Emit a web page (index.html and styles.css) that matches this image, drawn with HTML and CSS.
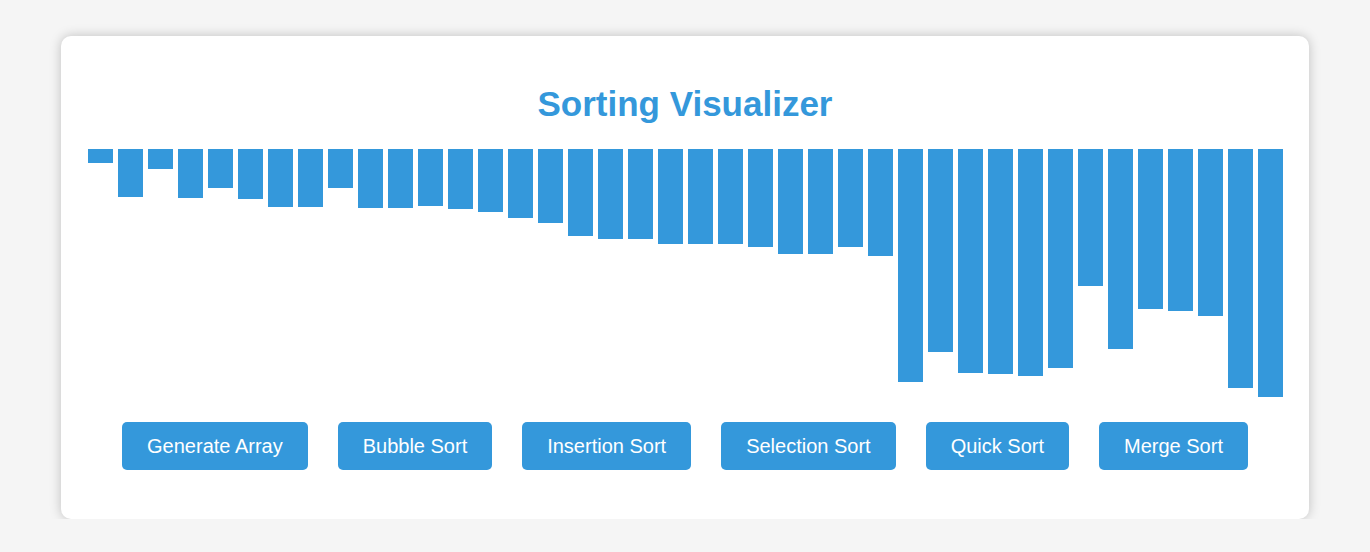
FILE: index.html
```html
<!DOCTYPE html>
<html lang="en">
<head>
<meta charset="utf-8">
<title>Sorting Visualizer</title>
<link rel="stylesheet" href="styles.css">
</head>
<body>
<div class="card">
  <h1 class="title">Sorting Visualizer</h1>
  <div class="bars">
    <div class="bar" style="height:14px"></div>
    <div class="bar" style="height:48px"></div>
    <div class="bar" style="height:20px"></div>
    <div class="bar" style="height:49px"></div>
    <div class="bar" style="height:39px"></div>
    <div class="bar" style="height:50px"></div>
    <div class="bar" style="height:58px"></div>
    <div class="bar" style="height:58px"></div>
    <div class="bar" style="height:39px"></div>
    <div class="bar" style="height:59px"></div>
    <div class="bar" style="height:59px"></div>
    <div class="bar" style="height:57px"></div>
    <div class="bar" style="height:60px"></div>
    <div class="bar" style="height:63px"></div>
    <div class="bar" style="height:69px"></div>
    <div class="bar" style="height:74px"></div>
    <div class="bar" style="height:87px"></div>
    <div class="bar" style="height:90px"></div>
    <div class="bar" style="height:90px"></div>
    <div class="bar" style="height:95px"></div>
    <div class="bar" style="height:95px"></div>
    <div class="bar" style="height:95px"></div>
    <div class="bar" style="height:98px"></div>
    <div class="bar" style="height:105px"></div>
    <div class="bar" style="height:105px"></div>
    <div class="bar" style="height:98px"></div>
    <div class="bar" style="height:107px"></div>
    <div class="bar" style="height:233px"></div>
    <div class="bar" style="height:203px"></div>
    <div class="bar" style="height:224px"></div>
    <div class="bar" style="height:225px"></div>
    <div class="bar" style="height:227px"></div>
    <div class="bar" style="height:219px"></div>
    <div class="bar" style="height:137px"></div>
    <div class="bar" style="height:200px"></div>
    <div class="bar" style="height:160px"></div>
    <div class="bar" style="height:162px"></div>
    <div class="bar" style="height:167px"></div>
    <div class="bar" style="height:239px"></div>
    <div class="bar" style="height:248px"></div>
  </div>
  <div class="controls">
    <button class="btn">Generate Array</button>
    <button class="btn">Bubble Sort</button>
    <button class="btn">Insertion Sort</button>
    <button class="btn">Selection Sort</button>
    <button class="btn">Quick Sort</button>
    <button class="btn">Merge Sort</button>
  </div>
</div>
</body>
</html>
```

FILE: styles.css
```css
html, body {
  margin: 0;
  padding: 0;
}

body {
  background: #f5f5f5;
  font-family: "Liberation Sans", Arial, sans-serif;
  padding-top: 36px;
}

.card {
  width: 1248px;
  box-sizing: border-box;
  margin: 0 auto;
  background: #ffffff;
  border-radius: 10px;
  box-shadow: 0 0 12px rgba(0, 0, 0, 0.22);
  padding: 24px 24px 49px;
}

.title {
  margin: 24px 0 25px;
  text-align: center;
  color: #3498db;
  font-size: 35px;
  line-height: 40px;
  font-weight: bold;
}

.bars {
  display: flex;
  justify-content: center;
  align-items: flex-start;
  gap: 5px;
  height: 250px;
  margin-bottom: 23px;
}

.bar {
  width: 25px;
  flex: 0 0 25px;
  background: #3498db;
}

.controls {
  display: flex;
  justify-content: center;
  gap: 30px;
}

.btn {
  font-family: "Liberation Sans", Arial, sans-serif;
  font-size: 20px;
  line-height: 24px;
  padding: 12px 25px 12px 25px;
  color: #ffffff;
  background: #3498db;
  border: none;
  border-radius: 5px;
  cursor: pointer;
}
```
